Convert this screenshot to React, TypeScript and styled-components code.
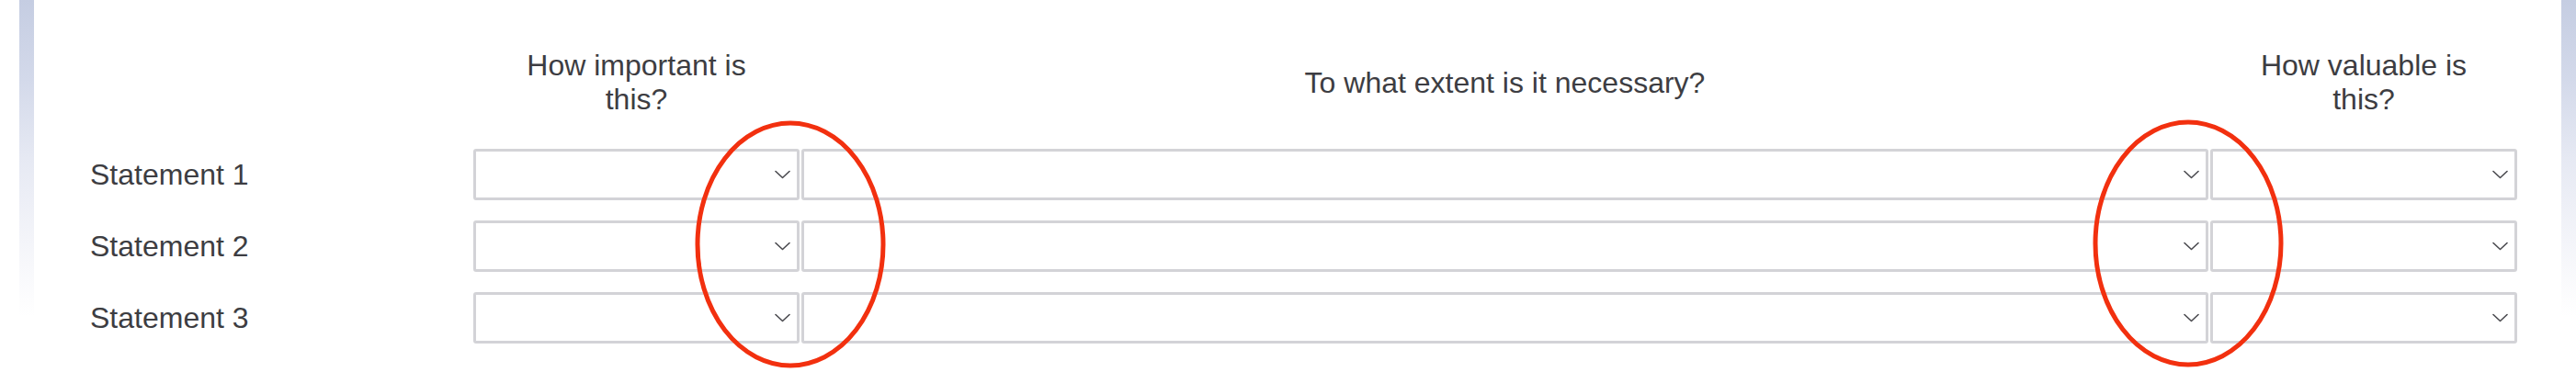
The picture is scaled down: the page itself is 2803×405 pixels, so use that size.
import React from "react";
import styled, { createGlobalStyle } from "styled-components";

const GlobalStyle = createGlobalStyle`
  html, body {
    margin: 0;
    padding: 0;
    background: #ffffff;
  }
  body {
    font-family: "Liberation Sans", Arial, Helvetica, sans-serif;
    color: #3d3d42;
  }
`;

const Page = styled.div`
  position: relative;
  display: flex;
  width: 2803px;
  height: 405px;
  overflow: hidden;
  background: #ffffff;
`;

const SideStrip = styled.div<{ $side: "left" | "right" }>`
  flex: 0 0 16px;
  margin-left: ${p => (p.$side === "left" ? "21px" : "0")};
  height: 345px;
  background: linear-gradient(
    to bottom,
    #c5cde2 0%,
    #d3d9ea 25%,
    #e6e9f3 50%,
    #f3f4f9 75%,
    #ffffff 100%
  );
`;

const Content = styled.div`
  flex: 1;
  padding: 53px 0 0 0;
`;

const MatrixGrid = styled.div`
  display: grid;
  grid-template-columns: 476px 355px 1531px 334px;
  column-gap: 2px;
  row-gap: 22px;
  align-items: center;
`;

const HeaderCell = styled.div`
  padding: 0 30px;
  font-size: 32px;
  line-height: 37px;
  text-align: center;
  color: #3d3d42;
  align-self: center;
  margin-bottom: 13px;
`;

const LabelCell = styled.div`
  padding-left: 61px;
  font-size: 32px;
  line-height: 37px;
  color: #3d3d42;
`;

const SelectBox = styled.div`
  box-sizing: border-box;
  height: 56px;
  display: flex;
  align-items: center;
  justify-content: flex-end;
  padding-right: 7px;
  border: 3px solid #d3d3d7;
  border-radius: 3px;
  background: #ffffff;
  cursor: pointer;
`;

const Overlay = styled.svg`
  position: absolute;
  left: 0;
  top: 0;
  pointer-events: none;
`;

function Chevron() {
  return (
    <svg width="17" height="10" viewBox="0 0 17 10" fill="none">
      <polyline
        points="1,1.5 8.5,8.5 16,1.5"
        stroke="#4a4a4f"
        strokeWidth="1.6"
        strokeLinecap="round"
        strokeLinejoin="round"
      />
    </svg>
  );
}

const headers = [
  "How important is this?",
  "To what extent is it necessary?",
  "How valuable is this?",
];

const statements = ["Statement 1", "Statement 2", "Statement 3"];

export default function App() {
  return (
    <>
      <GlobalStyle />
      <Page>
        <SideStrip $side="left" />
        <Content>
          <MatrixGrid>
            <div />
            {headers.map(h => (
              <HeaderCell key={h}>{h}</HeaderCell>
            ))}
            {statements.map(s => (
              <React.Fragment key={s}>
                <LabelCell>{s}</LabelCell>
                {headers.map(h => (
                  <SelectBox key={h} role="combobox" aria-label={`${s} - ${h}`}>
                    <Chevron />
                  </SelectBox>
                ))}
              </React.Fragment>
            ))}
          </MatrixGrid>
        </Content>
        <SideStrip $side="right" />
        <Overlay width="2803" height="405" viewBox="0 0 2803 405">
          <ellipse cx="860" cy="266" rx="101" ry="132" fill="none" stroke="#f2300f" strokeWidth="5" />
          <ellipse cx="2381" cy="265" rx="101" ry="132" fill="none" stroke="#f2300f" strokeWidth="5" />
        </Overlay>
      </Page>
    </>
  );
}
